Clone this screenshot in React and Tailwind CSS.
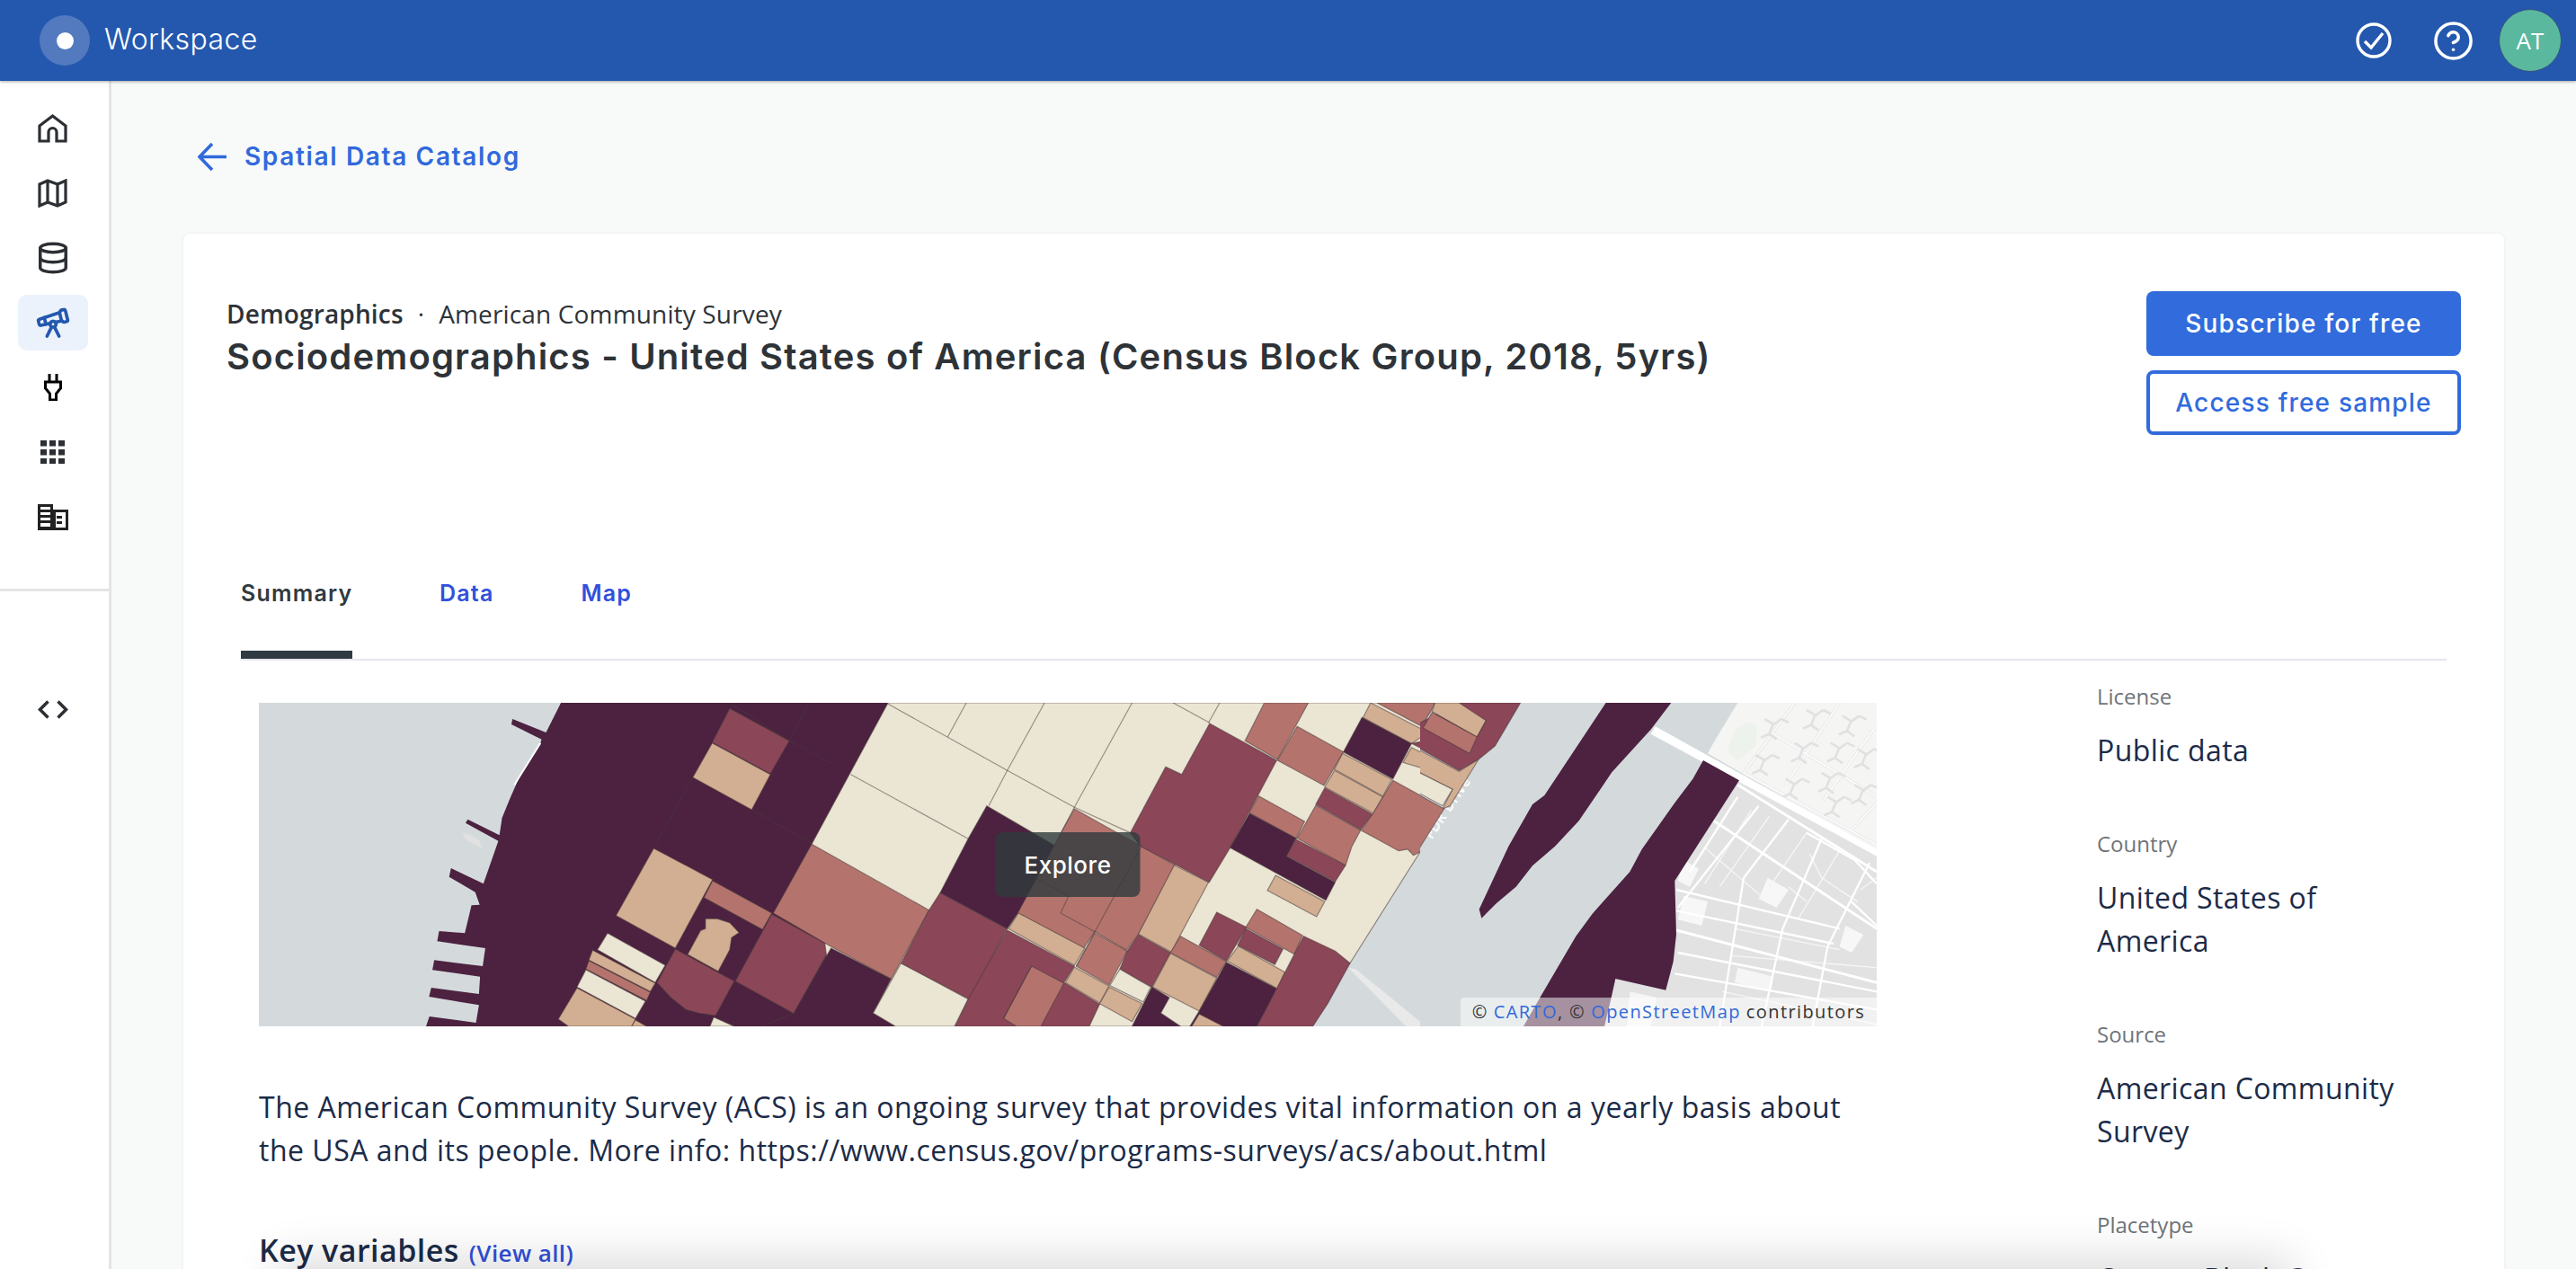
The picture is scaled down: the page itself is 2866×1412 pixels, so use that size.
import React from "react";
import { CircleHelp, Database, Telescope } from "lucide-react";

const DARK = "#4c2240";
const MAUVE = "#8b4658";
const ROSE = "#b4746d";
const TAN = "#d2af92";
const CREAM = "#ebe5d3";

// block shapes, in the coordinates of each map tile
const westBlocks = [
  [MAUVE, "1283,55 1443,163 1392,273 1236,168"],
  [TAN, "1236,170 1392,275 1342,393 1184,285"],
  [TAN, "1079,522 1237,626 1137,855 978,746"],
  [ROSE, "1237,630 1396,738 1371,793 1214,686"],
  [TAN, "1218,757 1250,757 1283,770 1308,803 1288,820 1283,860 1252,932 1170,876 1205,796 1218,790"],
  [MAUVE, "1137,858 1295,965 1245,1080 1200,1072 1165,1060 1125,1020 1088,970"],
  [MAUVE, "1396,742 1555,850 1455,1073 1298,965"],
  [CREAM, "955,805 1110,912 1083,970 928,860"],
  [TAN, "915,862 1083,972 1070,1000 905,895"],
  [ROSE, "905,897 1070,1002 1060,1030 897,925"],
  [CREAM, "897,927 1057,1032 1030,1090 873,985"],
  [TAN, "873,988 1030,1092 1020,1116 850,1116 823,1092"],
  [TAN, "1030,1095 1060,1116 1020,1116"],
  [CREAM, "1240,1085 1295,1116 1230,1116"],
];

const westLines = [
  "1283,36 1443,163 1568,245",
  "1497,36 1443,163",
  "1184,285 1080,520",
  "1342,393 1503,505",
];

const centerBlocks = [
  [CREAM, "140,36 1590,36 1590,490 1380,905 1130,1116 0,1116 -65,508"],
  [ROSE, "-65,508 250,728 148,958 -13,850 -168,738"],
  [DARK, "-13,855 148,958 100,1072 160,1116 -200,1116 -113,1073"],
  [CREAM, "175,905 355,1025 318,1116 160,1116 100,1072"],
  [MAUVE, "280,670 460,790 358,1025 175,905 250,728"],
  [DARK, "405,380 625,540 490,735 460,790 280,670 355,490"],
  [ROSE, "640,390 910,578 812,808 780,862 695,800 665,855 488,738 605,468"],
  [TAN, "490,738 668,855 640,912 463,790"],
  [MAUVE, "460,795 640,915 612,970 708,1042 680,1116 320,1116 355,1025"],
  [ROSE, "525,915 612,972 550,1116 485,1116 450,1090"],
  [TAN, "640,918 733,982 708,1038 616,970"],
  [ROSE, "695,805 782,865 733,978 645,915"],
  [MAUVE, "812,810 898,870 848,985 762,925 782,865"],
  [CREAM, "762,925 845,985 825,1035 735,980"],
  [TAN, "908,578 1000,635 900,868 812,808"],
  [MAUVE, "1003,105 1183,228 1058,520 1002,635 818,515 790,470 885,250 928,275"],
  [ROSE, "1150,36 1268,36 1185,225 1098,163"],
  [ROSE, "1238,115 1362,200 1310,312 1185,228"],
  [DARK, "1412,85 1545,172 1495,290 1362,200"],
  [TAN, "1435,36 1590,135 1545,172 1415,85"],
  [ROSE, "1452,36 1590,36 1590,126"],
  [TAN, "1360,205 1492,292 1468,348 1338,258"],
  [TAN, "1338,262 1468,350 1442,405 1312,317"],
  [ROSE, "1135,347 1258,432 1235,490 1110,403"],
  [DARK, "1110,405 1235,488 1210,548 1340,635 1315,695 1058,520"],
  [MAUVE, "1235,492 1368,578 1340,633 1210,546"],
  [ROSE, "1288,378 1408,462 1385,515 1368,578 1238,488"],
  [MAUVE, "1312,320 1440,408 1408,460 1288,375"],
  [ROSE, "1495,295 1590,360 1590,520 1550,545 1535,525 1510,530 1410,462 1442,405"],
  [MAUVE, "1545,172 1590,200 1590,160"],
  [TAN, "1545,185 1590,214 1590,260 1522,235"],
  [TAN, "1180,612 1312,700 1290,750 1158,662"],
  [MAUVE, "1022,735 1102,785 1048,898 975,845"],
  [ROSE, "1130,725 1252,812 1230,875 1100,785"],
  [MAUVE, "1100,790 1200,858 1178,910 1078,845"],
  [TAN, "1080,848 1205,935 1185,990 1050,898"],
  [ROSE, "925,815 1048,900 1022,952 898,870"],
  [TAN, "898,872 1022,955 975,1065 850,985"],
  [DARK, "1048,902 1183,990 1160,1050 1130,1116 950,1116 975,1065"],
  [MAUVE, "1255,815 1340,865 1380,905 1320,1040 1280,1116 1130,1116 1183,990"],
  [TAN, "975,1075 1040,1116 955,1116"],
  [DARK, "848,985 895,1020 872,1072 925,1116 795,1116"],
  [TAN, "733,985 822,1040 795,1100 708,1040"],
];

const centerLines = [
  "140,40 460,262 640,385 790,470",
  "350,36 300,150",
  "560,36 460,262 410,380",
  "795,36 640,385 605,468",
  "905,36 1003,103",
  "1030,36 1000,103",
  "40,275 355,490",
  "820,515 695,800 645,915",
  "603,738 625,680 540,625",
  "603,738 695,800",
  "450,1090 525,915",
];

const eastBlocks = [
  [ROSE, "-14,36 50,36 35,65 -14,145"],
  [MAUVE, "130,36 335,36 250,180 195,225 130,262 -14,182 -14,110"],
  [TAN, "50,36 130,36 220,95 190,150 40,65"],
  [ROSE, "40,68 190,150 165,205 10,120"],
  [TAN, "-14,188 130,265 195,225 100,380 75,390 108,325 -14,263"],
  [CREAM, "-14,263 108,325 75,380 -14,332"],
  [ROSE, "-14,338 80,390 -14,540"],
];

const seRoads = [
  "980,430 1524,790",
  "1060,310 1524,600",
  "855,795 1524,970",
  "855,660 1400,790",
  "855,730 1380,840",
  "860,870 1524,1000",
  "850,940 1524,1060",
  "1230,425 1080,620 1000,1116",
  "1340,490 1210,790 1140,1116",
  "1500,570 1360,850 1310,1116",
  "1130,380 860,720",
  "1060,350 900,600",
  "1290,470 1450,560 1524,640",
  "1440,700 1524,780",
];

// thin side streets between the main roads
const seLanes = [
  "1105,395 950,640",
  "1165,415 1000,650",
  "1290,470 1140,690",
  "1400,530 1260,760",
  "950,520 1160,700",
  "1300,540 1340,620 1460,700",
  "1040,880 1524,920",
  "1010,1000 1524,1110",
  "1050,790 1400,860",
  "1230,650 1290,700",
  "1470,660 1524,620",
];

const neRoads = [
  "1250,36 1080,270",
  "1400,36 1220,310",
  "1524,110 1340,370",
  "1524,370 1440,460",
  "1180,140 1524,350",
  "1080,270 1524,510",
];

const squiggles = [
  [1150, 90], [1290, 60], [1410, 80], [1120, 210], [1250, 170], [1370, 170],
  [1460, 190], [1220, 290], [1340, 270], [1450, 310], [1360, 350],
];

function Blocks({ items, lines, transform, clip }) {
  return (
    <g transform={transform} clipPath={clip}>
      {items.map(([fill, points], i) => (
        <polygon key={i} points={points} fill={fill} stroke="#4a3a3c" strokeOpacity="0.55" strokeWidth="1.2" vectorEffect="non-scaling-stroke" />
      ))}
      {lines.map((points, i) => (
        <polyline key={i} points={points} fill="none" stroke="#4a3a3c" strokeOpacity="0.5" strokeWidth="1.2" vectorEffect="non-scaling-stroke" />
      ))}
    </g>
  );
}

function MapPreview() {
  return (
    <svg viewBox="0 0 1800 360" className="block h-[360px] w-[1800px]">
      <defs>
        <clipPath id="centerClip">
          <rect x="-400" y="0" width="1968" height="1200" />
        </clipPath>
        <clipPath id="eastClip">
          <rect x="0" y="0" width="1600" height="1200" />
        </clipPath>
      </defs>
      <rect width="1800" height="360" fill="#d4dadc" />
      <g transform="translate(-8 -12) scale(.41455 .33333)">
        <polygon
          fill={DARK}
          points="830,36 790,135 700,90 697,108 778,158 775,170 720,280 695,350 672,420 665,478 580,425 574,437 662,497 622,640 535,588 530,617 600,668 612,710 590,712 572,805 503,798 498,832 627,855 620,915 490,895 485,928 613,950 610,1008 482,987 476,1017 610,1045 602,1104 477,1083 468,1116 2000,1116 2000,36"
        />
        <polyline points="775,170 740,240 705,310" fill="none" stroke="#ffffff" strokeWidth="2" vectorEffect="non-scaling-stroke" />
        <polygon points="565,472 585,475 610,495 622,522 600,510 575,495" fill="#e1e1e2" />
      </g>
      <Blocks items={westBlocks} lines={westLines} transform="translate(-8 -12) scale(.41455 .33333)" />
      <g transform="translate(642 -12) scale(.41455 .33333)">
        <Blocks items={centerBlocks} lines={centerLines} clip="url(#centerClip)" />
        <polygon points="1375,920 1395,925 1568,1100 1568,1116 1530,1116" fill="#e9e9e9" />
      </g>
      <g transform="translate(1292 -12) scale(.33333)">
        <text x="0" y="0" transform="translate(38 492) rotate(-56)" fill="#d4dadc" stroke="#ffffff" strokeWidth="2.5" fontSize="44" fontFamily="'Open Sans', sans-serif" letterSpacing="4">
          FDR Drive
        </text>
        <Blocks items={eastBlocks} lines={["190,150 220,95"]} clip="url(#eastClip)" />
        <polygon points="1060,36 1524,36 1524,530 960,205 985,160" fill="#f5f6f4" />
        <polygon points="1050,130 1090,100 1125,110 1120,180 1060,230 1025,195" fill="#eef2ed" />
        {neRoads.map((points, i) => (
          <polyline key={i} points={points} fill="none" stroke="#e4e4e4" strokeWidth="10" />
        ))}
        {neRoads.map((points, i) => (
          <polyline key={i} points={points} fill="none" stroke="#fbfbfb" strokeWidth="6" />
        ))}
        {squiggles.map(([x, y], i) => (
          <path
            key={i}
            transform={`translate(${x} ${y})`}
            d="M0 0 L30 18 L55 0 M28 18 L15 50 L40 68 M15 50 L-12 62 M55 0 L80 12"
            fill="none"
            stroke="#e0e1e0"
            strokeWidth="8"
          />
        ))}
        <polygon points="1065,300 1524,545 1524,1116 620,1116 652,957 820,995 850,630" fill="#e2e2e2" />
        <polygon points="1160,620 1230,660 1190,720 1130,690" fill="#f7f7f7" />
        <polygon points="880,560 930,590 900,650 860,630" fill="#f7f7f7" />
        <polygon points="1060,920 1180,950 1170,1000 1050,970" fill="#f5f5f5" />
        <polygon points="1420,780 1480,810 1440,870 1400,850" fill="#f7f7f7" />
        <polygon points="880,680 960,700 940,780 860,760" fill="#f7f7f7" />
        <polygon points="700,1000 790,1020 770,1116 690,1116" fill="#f5f5f5" />
        {seLanes.map((points, i) => (
          <polyline key={i} points={points} fill="none" stroke="#f6f6f6" strokeWidth="4" />
        ))}
        {seRoads.map((points, i) => (
          <polyline key={i} points={points} fill="none" stroke="#ffffff" strokeWidth={i < 3 ? 9 : 7} />
        ))}
        <polygon points="785,115 1524,525 1524,548 770,140" fill="#ffffff" />
        <polygon points="620,36 838,36 770,125 640,268 530,430 450,515 375,580 320,650 255,705 205,755 197,725 295,515 375,375 415,345" fill={DARK} />
        <polygon points="945,228 1065,295 850,630 855,810 845,900 820,995 652,957 638,1020 615,1116 345,1116 400,1020 520,815 575,740 700,600 740,525 850,370 910,290" fill={DARK} />
      </g>
    </svg>
  );
}

function NavItem({ active, children }) {
  return (
    <div className={`flex h-[62px] w-[78px] items-center justify-center rounded-[10px] ${active ? "bg-[#ebf2fb]" : ""}`}>
      {children}
    </div>
  );
}

function Meta({ label, children }) {
  return (
    <div className="mb-[62px]">
      <div className="text-[24px] leading-[36px] text-[#6f7479]">{label}</div>
      <div className="mt-[18px] text-[32px] leading-[48px] tracking-[0.4px] text-[#1c2b47]">{children}</div>
    </div>
  );
}

export default function App() {
  return (
    <div className="relative flex h-[1412px] flex-col overflow-hidden bg-[#f8f9f9] [font-family:'Open_Sans',sans-serif]">
      {/* Barra superior */}
      <header className="relative z-10 flex h-[90px] shrink-0 items-center justify-between bg-[#2458ae] pr-[16px] pl-[44px] shadow-[0_1px_3px_rgba(0,0,0,0.35)]">
        <div className="flex items-center gap-[16px]">
          <div className="flex h-[56px] w-[56px] items-center justify-center rounded-full bg-[#5379bf]">
            <div className="h-[19px] w-[19px] rounded-full bg-white" />
          </div>
          <span className="mb-[3px] text-[32px] font-light tracking-[0.4px] text-white [font-family:Inter,sans-serif]">Workspace</span>
        </div>
        <div className="flex items-center">
          <svg width="40" height="40" viewBox="0 0 40 40" fill="none" stroke="white" strokeWidth="3.4">
            <circle cx="20" cy="20" r="18" />
            <path d="M10 21 L17 28 L30 12" strokeWidth="3.4" />
          </svg>
          <CircleHelp size={47} strokeWidth={1.8} color="white" className="ml-[45px]" />
          <div className="ml-[27px] flex h-[70px] w-[70px] items-center justify-center rounded-full border border-[#36507f] bg-[#5ab89f] text-[26px] text-white">
            AT
          </div>
        </div>
      </header>

      <div className="flex min-h-0 flex-1">
        {/* Menu lateral */}
        <aside className="flex w-[124px] shrink-0 flex-col border-r-[3px] border-[#e3e4e4] bg-white">
          <div className="flex flex-col items-center gap-[10px] pt-[22px] pr-[4px] pb-[49px]">
            <NavItem>
              <svg width="33" height="32" viewBox="0 0 33 32" fill="none" stroke="#2c2f33" strokeWidth="3.2">
                <path d="M2 13 L16.5 2 L31 13 V30 H21 V20 A4.5 4.5 0 0 0 12 20 V30 H2 Z" />
              </svg>
            </NavItem>
            <NavItem>
              <svg width="33" height="32" viewBox="0 0 33 32" fill="none" stroke="#2c2f33" strokeWidth="3.2">
                <path d="M2 6 L11 2 L22 6 L31 2 V26 L22 30 L11 26 L2 30 Z M11 2 V26 M22 6 V30" />
              </svg>
            </NavItem>
            <NavItem>
              <Database size={38} strokeWidth={2.2} color="#2c2f33" />
            </NavItem>
            <NavItem active>
              <Telescope size={40} strokeWidth={2.2} color="#2458ae" />
            </NavItem>
            <NavItem>
              <svg width="22" height="30" viewBox="0 0 22 30" fill="none" stroke="#000000" strokeWidth="3">
                <path d="M7 0 V9 M15 0 V9 M2.5 9 H19.5 V16 L14.5 22 V29 H7.5 V22 L2.5 16 Z" />
              </svg>
            </NavItem>
            <NavItem>
              <svg width="28" height="26" viewBox="0 0 28 26" fill="#2c2f33">
                {[0, 10, 20].map((x) =>
                  [0, 10, 20].map((y) => <rect key={`${x}-${y}`} x={x} y={y} width="7" height="6.5" />)
                )}
              </svg>
            </NavItem>
            <NavItem>
              <svg width="34" height="29" viewBox="0 0 34 29">
                <path fill="#222222" d="M0 0 H17 V6 H34 V29 H0 Z" />
                <path fill="#ffffff" d="M3 3 H14 V6 H3 Z M3 9 H14 V12 H3 Z M3 15 H14 V18 H3 Z M3 21 H14 V25 H3 Z M20 9 H31 V26 H20 Z" />
                <path fill="#222222" d="M21 13 H27 V16 H21 Z M21 19 H27 V22 H21 Z" />
              </svg>
            </NavItem>
          </div>
          <div className="h-[3px] bg-[#e5e5e5]" />
          <div className="flex justify-center pt-[100px] pr-[4px]">
            <NavItem>
              <svg width="34" height="21" viewBox="0 0 34 21" fill="none" stroke="#2c2f33" strokeWidth="3.5">
                <path d="M11.5 1.5 L2.5 10.5 L11.5 19.5 M22.5 1.5 L31.5 10.5 L22.5 19.5" />
              </svg>
            </NavItem>
          </div>
        </aside>

        {/* Contenido */}
        <main className="min-w-0 flex-1 pl-[80px]">
          <div className="mt-[54px] flex h-[60px] items-center gap-[20px] pl-[16px] text-[#3069dc]">
            <svg width="32" height="31" viewBox="0 0 32 31" fill="none" stroke="#3069dc" strokeWidth="3.6">
              <path d="M32 15.5 H3 M16 1 L2 15.5 L16 30" />
            </svg>
            <span className="text-[28px] font-semibold tracking-[1.65px] [font-family:Inter,sans-serif]">Spatial Data Catalog</span>
          </div>

          <div className="mt-[56px] w-[2582px] rounded-t-[8px] bg-white px-[48px] pt-[64px] shadow-[0_0_4px_rgba(0,0,0,0.06)]">
            <div className="flex items-start justify-between">
              <div className="mt-[5px]">
                <div className="text-[28px] leading-[40px] tracking-[0.15px] text-[#2e3338]">
                  <span className="font-semibold">Demographics</span>
                  <span className="mx-[16px]">·</span>
                  <span>American Community Survey</span>
                </div>
                <h1 className="mt-[3px] text-[40px] leading-[50px] font-semibold tracking-[1.16px] text-[#2e3338] [font-family:Inter,sans-serif]">
                  Sociodemographics - United States of America (Census Block Group, 2018, 5yrs)
                </h1>
              </div>
              <div className="flex w-[350px] flex-col gap-[16px] [font-family:Inter,sans-serif]">
                <button className="h-[72px] rounded-[8px] bg-[#316bdc] text-[28px] font-medium tracking-[1.2px] text-white">
                  Subscribe for free
                </button>
                <button className="h-[72px] rounded-[8px] border-[4px] border-[#316bdc] bg-white text-[28px] font-medium tracking-[1.2px] text-[#316bdc]">
                  Access free sample
                </button>
              </div>
            </div>

            <div className="mt-[116px] mr-[16px] ml-[16px] flex gap-[97px] border-b-[2px] border-[#e5e6ee] text-[25px] font-semibold tracking-[1.2px] [font-family:Inter,sans-serif]">
              <div className="h-[133px] w-[124px] border-b-[9px] border-[#2f3a42] pt-[40px] leading-[40px] whitespace-nowrap text-[#303a42]">Summary</div>
              <div className="h-[132px] pt-[40px] leading-[40px] text-[#3050dc]">Data</div>
              <div className="h-[132px] pt-[40px] leading-[40px] text-[#3050dc]">Map</div>
            </div>

            <div className="ml-[36px] flex">
              <div className="w-[1800px] shrink-0 pt-[47px]">
                <div className="relative">
                  <MapPreview />
                  <div className="absolute top-1/2 left-1/2 flex h-[72px] w-[161px] -translate-x-1/2 -translate-y-1/2 items-center justify-center rounded-[8px] bg-[#303b3d]/80 text-[26px] font-medium tracking-[0.5px] text-white [font-family:Inter,sans-serif]">
                    Explore
                  </div>
                  <div className="absolute right-0 bottom-0 flex h-[32px] w-[463px] items-center justify-center rounded-tl-[4px] bg-white/50 text-[20px] tracking-[1.4px] whitespace-nowrap text-[#333333]">
                    © <span className="ml-[6px] text-[#3069dc]">CARTO</span>, © <span className="mx-[6px] text-[#3069dc]">OpenStreetMap</span> contributors
                  </div>
                </div>
                <p className="mt-[66px] text-[32px] leading-[48px] tracking-[0.5px] text-[#1c2b47]">
                  The American Community Survey (ACS) is an ongoing survey that provides vital information on a yearly basis about the USA and its people. More info: https://www.census.gov/programs-surveys/acs/about.html
                </p>
                <div className="mt-[67px] leading-[40px] text-[#1c2b47]">
                  <span className="text-[34px] font-semibold tracking-[0.45px]">Key variables</span>
                  <span className="ml-[11px] text-[26px] font-semibold tracking-[0.4px] text-[#3050dc]">(View all)</span>
                </div>
              </div>

              <div className="ml-[245px] w-[370px] pt-[22px]">
                <Meta label="License">Public data</Meta>
                <Meta label="Country">United States of America</Meta>
                <Meta label="Source">American Community Survey</Meta>
                <Meta label="Placetype">Census Block Group</Meta>
              </div>
            </div>
          </div>
        </main>
      </div>

      {/* Sombra del pie */}
      <div className="pointer-events-none absolute top-[1430px] left-[340px] h-[20px] w-[2180px] shadow-[0_0_50px_30px_rgba(0,0,0,0.14)]" />
    </div>
  );
}
